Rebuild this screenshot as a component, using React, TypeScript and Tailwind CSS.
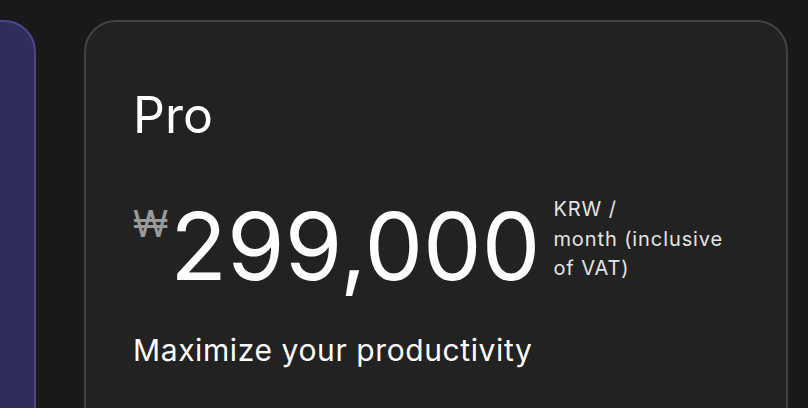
const App = () => {
  return (
    <div
      className="h-[408px] w-[808px] overflow-hidden bg-[#191919] pt-5"
      style={{ fontFamily: "Inter, 'Noto Sans', sans-serif" }}
    >
      <div className="flex gap-12">
        <div className="h-[460px] w-[704px] shrink-0 -ml-[668px] rounded-[32px] border-2 border-[#4a478a] bg-[#2f2d5b]" />
        <div className="h-[460px] w-[704px] shrink-0 rounded-[32px] border-2 border-[#434343] bg-[#222222] pl-[47px] pt-[68px] text-white">
          <h2 className="text-[50px] leading-none font-normal">Pro</h2>
          <div className="mt-[60px] flex items-start">
            <span className="mt-[5px] text-[37px] leading-none text-[#9a9a9a]">₩</span>
            <span className="ml-[2px] text-[93px] leading-none">299,000</span>
            <div className="-mt-[5px] ml-[13px] text-[20px] leading-[29.5px] tracking-[0.9px] text-[#e4e4e4]">
              KRW /
              <br />
              month (inclusive
              <br />
              of VAT)
            </div>
          </div>
          <p className="mt-[42px] text-[30px] leading-none tracking-[0.6px]">Maximize your productivity</p>
        </div>
      </div>
    </div>
  );
};

export default App;
